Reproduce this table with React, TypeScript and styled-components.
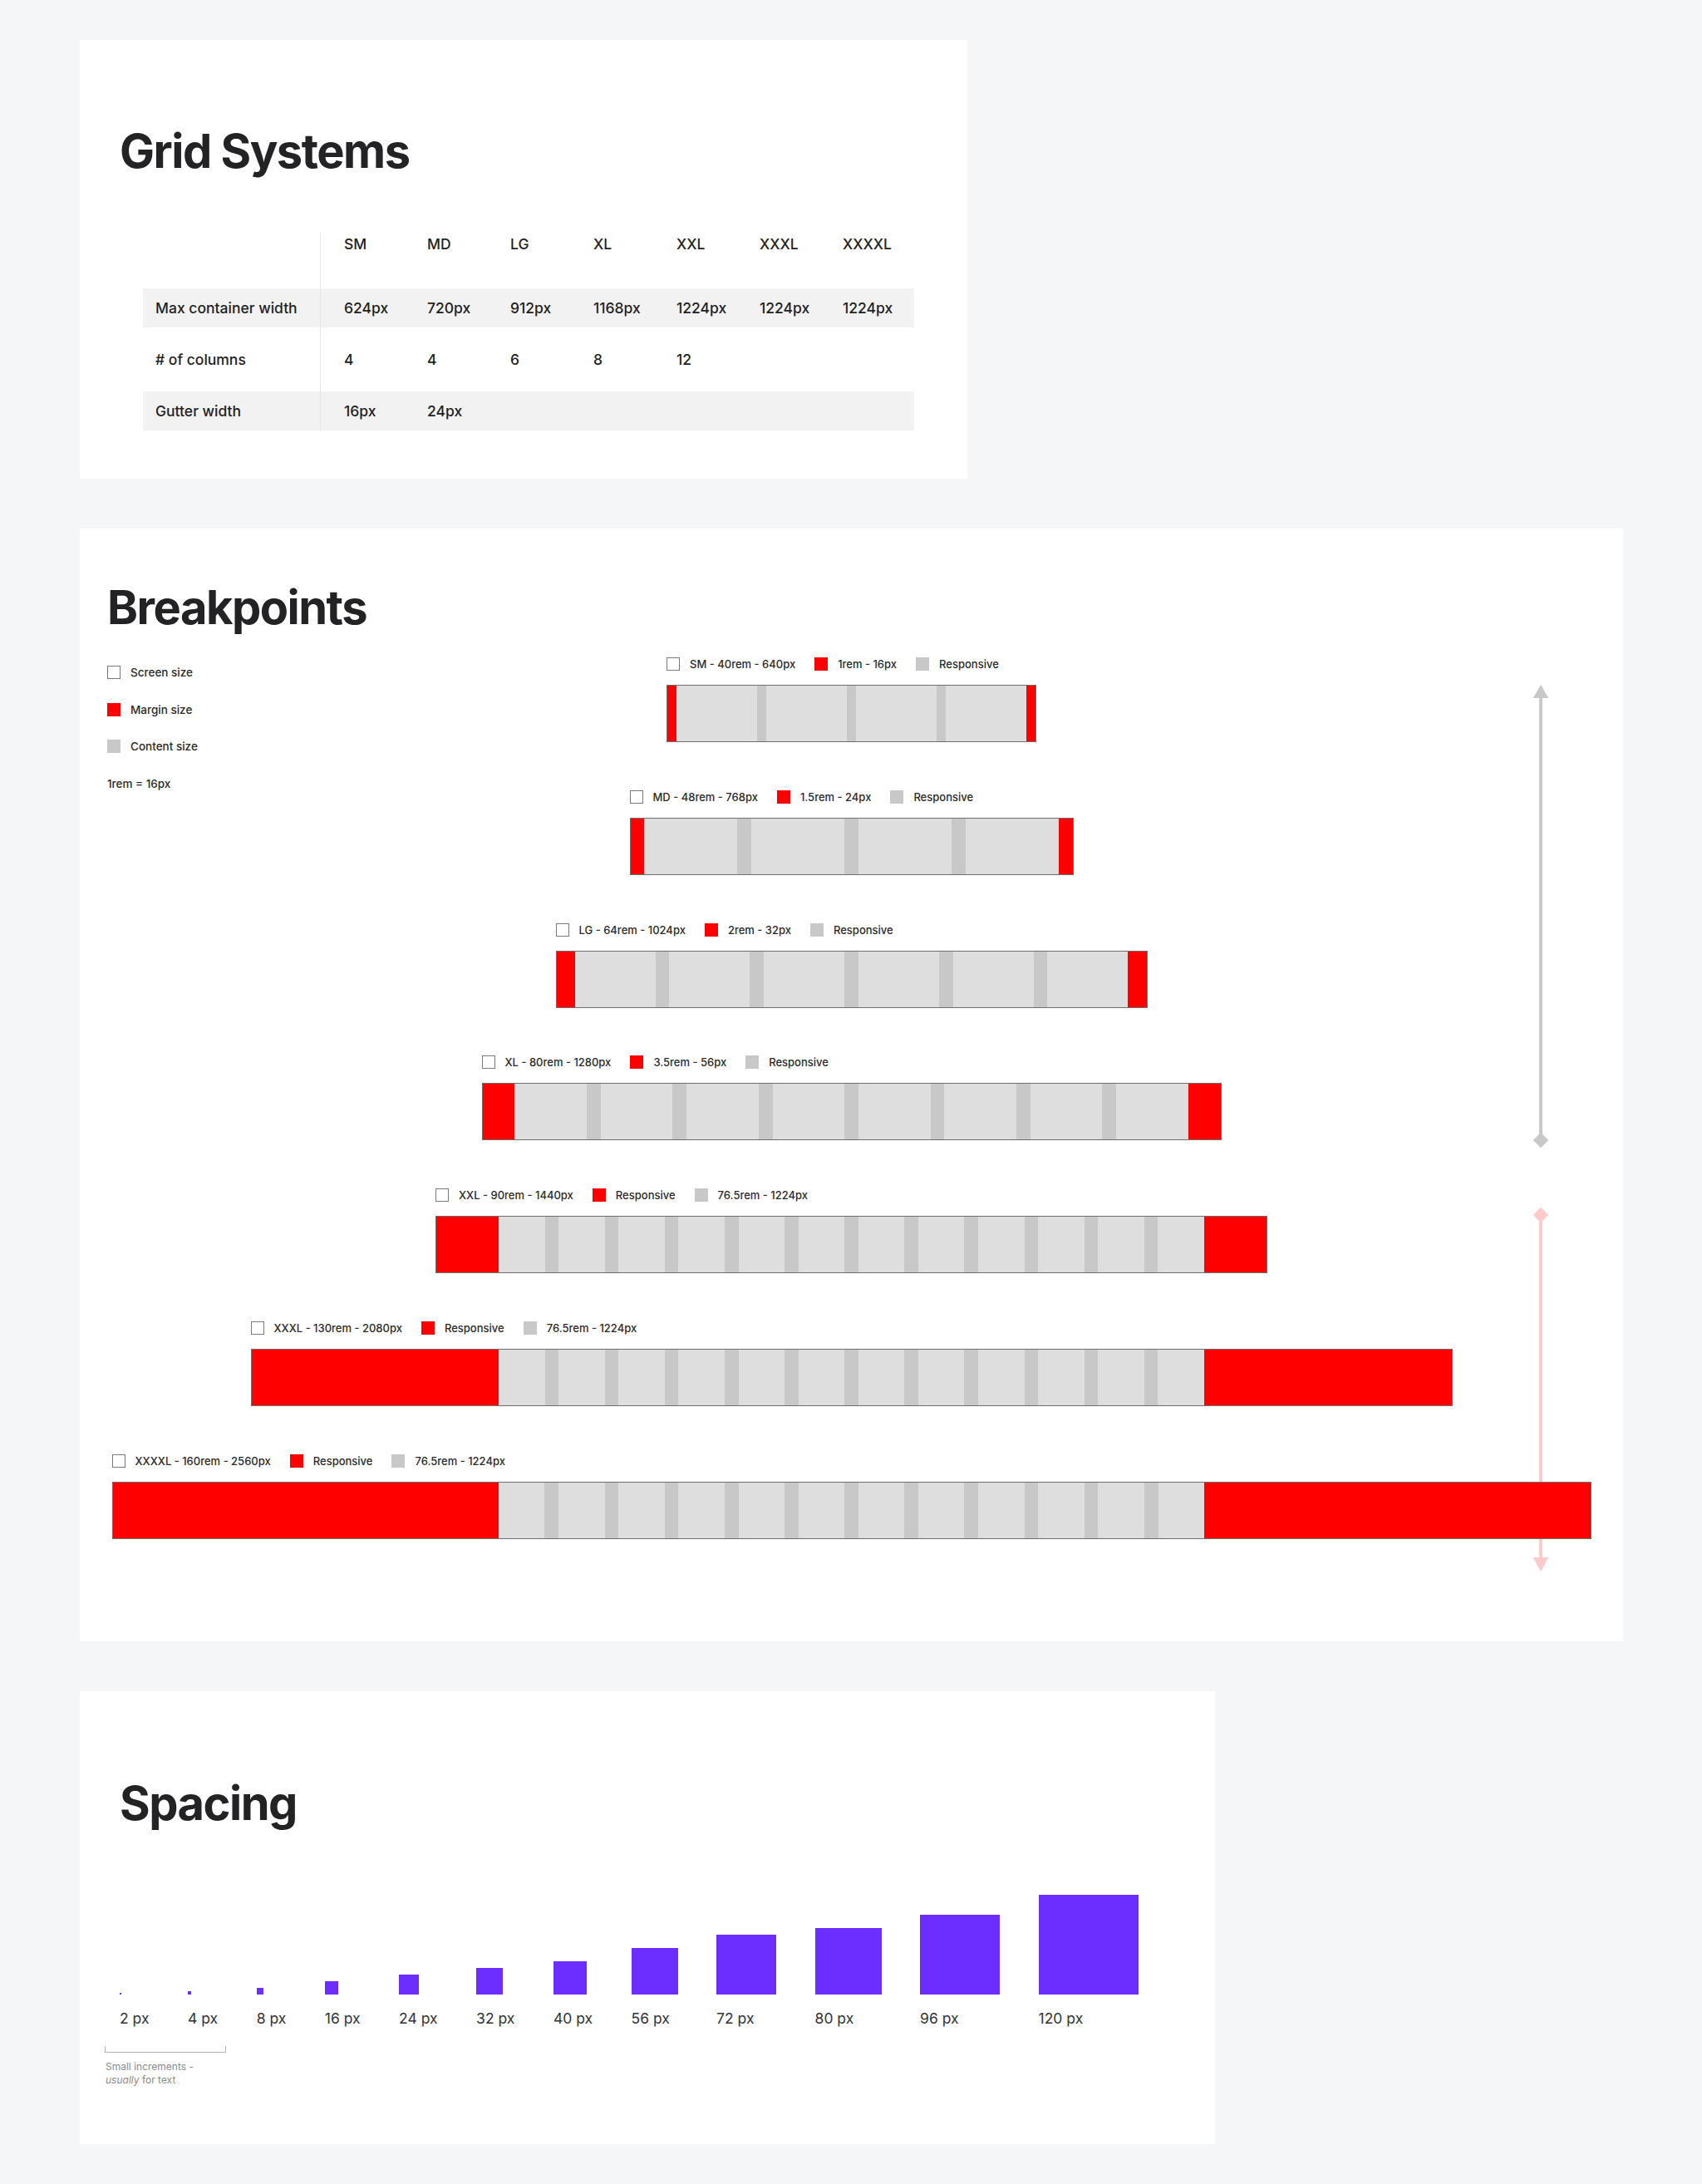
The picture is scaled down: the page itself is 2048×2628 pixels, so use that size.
import type { FC } from "react";
import styled, { createGlobalStyle } from "styled-components";

const SCALE = 1780 / 2560;

type Breakpoint = {
  labels: [string, string, string];
  screen: number;
  margin: number;
  gutter: number;
  cols: number;
};

const BREAKPOINTS: Breakpoint[] = [
  { labels: ["SM - 40rem - 640px", "1rem - 16px", "Responsive"], screen: 640, margin: 16, gutter: 16, cols: 4 },
  { labels: ["MD - 48rem - 768px", "1.5rem - 24px", "Responsive"], screen: 768, margin: 24, gutter: 24, cols: 4 },
  { labels: ["LG - 64rem - 1024px", "2rem - 32px", "Responsive"], screen: 1024, margin: 32, gutter: 24, cols: 6 },
  { labels: ["XL - 80rem - 1280px", "3.5rem - 56px", "Responsive"], screen: 1280, margin: 56, gutter: 24, cols: 8 },
  { labels: ["XXL - 90rem - 1440px", "Responsive", "76.5rem - 1224px"], screen: 1440, margin: 108, gutter: 24, cols: 12 },
  { labels: ["XXXL - 130rem - 2080px", "Responsive", "76.5rem - 1224px"], screen: 2080, margin: 428, gutter: 24, cols: 12 },
  { labels: ["XXXXL - 160rem - 2560px", "Responsive", "76.5rem - 1224px"], screen: 2560, margin: 668, gutter: 24, cols: 12 },
];

const SIZES = ["SM", "MD", "LG", "XL", "XXL", "XXXL", "XXXXL"];

const TABLE_ROWS: { label: string; values: string[]; shade: boolean }[] = [
  { label: "Max container width", values: ["624px", "720px", "912px", "1168px", "1224px", "1224px", "1224px"], shade: true },
  { label: "# of columns", values: ["4", "4", "6", "8", "12"], shade: false },
  { label: "Gutter width", values: ["16px", "24px"], shade: true },
];

const SPACINGS = [2, 4, 8, 16, 24, 32, 40, 56, 72, 80, 96, 120];

const GlobalStyle = createGlobalStyle`
  html, body {
    margin: 0;
    padding: 0;
    background: #f5f6f8;
  }
  body {
    font-family: Inter, "Liberation Sans", sans-serif;
    color: #232326;
    -webkit-font-smoothing: antialiased;
  }
`;

const Page = styled.main`
  display: flex;
  flex-direction: column;
  align-items: flex-start;
  gap: 60px;
  padding: 48px 0 48px 96px;
`;

const Card = styled.section<{ $w: number; $h: number; $pad: string }>`
  position: relative;
  box-sizing: border-box;
  width: ${(p) => p.$w}px;
  height: ${(p) => p.$h}px;
  padding: ${(p) => p.$pad};
  background: #fff;
`;

const Title = styled.h1`
  margin: 0;
  font-size: 56px;
  line-height: 56px;
  font-weight: 700;
  letter-spacing: -1.5px;
  color: #232326;
`;

/* grid systems table */

const Table = styled.div`
  display: flex;
  flex-direction: column;
  gap: 15px;
  width: 928px;
  margin: 70px 0 0 28px;
  background: linear-gradient(#e4e4e4, #e4e4e4) 213px 0 / 1px 100% no-repeat;
`;

const Row = styled.div<{ $head?: boolean; $shade?: boolean }>`
  display: grid;
  grid-template-columns: 214px repeat(7, 100px) 1fr;
  align-items: ${(p) => (p.$head ? "start" : "center")};
  height: ${(p) => (p.$head ? 52 : 47)}px;
  background: ${(p) => (p.$shade ? "#f2f2f2" : "transparent")};
  font-size: 17.5px;
  line-height: 20px;
  font-weight: 500;
  color: #222;
`;

const LabelCell = styled.div`
  align-self: stretch;
  box-sizing: border-box;
  display: flex;
  align-items: center;
  padding-left: 15px;
  border-right: 1px solid #e4e4e4;
  white-space: nowrap;
`;

const Cell = styled.div<{ $head?: boolean }>`
  padding: ${(p) => (p.$head ? "4px 0 0 28px" : "0 0 0 28px")};
  white-space: nowrap;
`;

/* breakpoints */

const Stage = styled.div`
  display: grid;
  margin-top: 32px;
`;

const Legend = styled.div`
  grid-area: 1 / 1;
  justify-self: start;
  display: flex;
  flex-direction: column;
  gap: 28.5px;
  margin-top: 10px;
`;

const LegendItem = styled.div<{ $small?: boolean }>`
  display: flex;
  align-items: center;
  gap: 12px;
  height: 16px;
  font-size: ${(p) => (p.$small ? 13 : 13.5)}px;
  line-height: 16px;
  font-weight: 500;
  color: #2a2a2a;
  white-space: nowrap;
`;

const Swatch = styled.span<{ $kind: "screen" | "margin" | "content" }>`
  flex: none;
  box-sizing: border-box;
  width: 16px;
  height: 16px;
  background: ${(p) => (p.$kind === "margin" ? "#ff0000" : p.$kind === "content" ? "#c8c8c8" : "#fff")};
  border: ${(p) => (p.$kind === "screen" ? "1.5px solid #7a7a7a" : "none")};
`;

const Bars = styled.div`
  grid-area: 1 / 1;
  justify-self: center;
  display: flex;
  flex-direction: column;
  align-items: center;
  gap: 57.8px;
`;

const Block = styled.div<{ $w: number }>`
  display: flex;
  flex-direction: column;
  gap: 17px;
  width: ${(p) => p.$w}px;
`;

const LabelRow = styled.div`
  display: flex;
  align-items: center;
  gap: 23px;
`;

const Bar = styled.div`
  position: relative;
  z-index: 1;
  display: flex;
  box-sizing: border-box;
  height: 69px;
  border: 1px solid #6e6e6e;
`;

const MarginFill = styled.div<{ $w: number }>`
  flex: none;
  width: ${(p) => p.$w}px;
  background: #ff0000;
`;

const ContentFill = styled.div<{ $gap: number }>`
  flex: 1;
  display: flex;
  gap: ${(p) => p.$gap}px;
  background: #c8c8c8;
`;

const Column = styled.div`
  flex: 1;
  background: #dedede;
`;

const Arrow = styled.svg`
  position: absolute;
  z-index: 0;
  left: 1748px;
  top: 188px;
`;

/* spacing */

const SpacingRow = styled.div`
  display: flex;
  align-items: flex-end;
  gap: 46.5px;
  margin-top: 82px;
`;

const SpacingItem = styled.div`
  display: flex;
  flex-direction: column;
  align-items: flex-start;
`;

const Square = styled.div<{ $s: number }>`
  width: ${(p) => p.$s}px;
  height: ${(p) => p.$s}px;
  background: #6b2eff;
`;

const SizeLabel = styled.span`
  margin-top: 18px;
  font-size: 17.5px;
  line-height: 22px;
  color: #333;
  white-space: nowrap;
`;

const Bracket = styled.div`
  box-sizing: border-box;
  width: 146px;
  height: 8px;
  margin: 22px 0 0 -18px;
  border: 1.5px solid #b3b3b3;
  border-top: none;
`;

const Note = styled.p`
  margin: 9px 0 0 -17px;
  font-size: 12px;
  line-height: 15.5px;
  color: #8c8c8c;
`;

const BreakpointBar: FC<{ bp: Breakpoint }> = ({ bp }) => {
  const width = Math.round(bp.screen * SCALE);
  const margin = bp.margin * SCALE;
  const kinds: ("screen" | "margin" | "content")[] = ["screen", "margin", "content"];
  return (
    <Block $w={width}>
      <LabelRow>
        {bp.labels.map((text, i) => (
          <LegendItem key={text + i} $small>
            <Swatch $kind={kinds[i]} />
            {text}
          </LegendItem>
        ))}
      </LabelRow>
      <Bar>
        <MarginFill $w={margin} />
        <ContentFill $gap={bp.gutter * SCALE}>
          {[...Array<unknown>(bp.cols)].map((_, i) => (
            <Column key={i} />
          ))}
        </ContentFill>
        <MarginFill $w={margin} />
      </Bar>
    </Block>
  );
};

export default function App() {
  return (
    <>
      <GlobalStyle />
      <Page>
        <Card $w={1068} $h={528} $pad="106px 0 0 48px">
          <Title>Grid Systems</Title>
          <Table>
            <Row $head>
              <LabelCell />
              {SIZES.map((s) => (
                <Cell key={s} $head>
                  {s}
                </Cell>
              ))}
            </Row>
            {TABLE_ROWS.map((row) => (
              <Row key={row.label} $shade={row.shade}>
                <LabelCell>{row.label}</LabelCell>
                {row.values.map((v, i) => (
                  <Cell key={i}>{v}</Cell>
                ))}
              </Row>
            ))}
          </Table>
        </Card>

        <Card $w={1857} $h={1339} $pad="67px 33px 0">
          <Title>Breakpoints</Title>
          <Stage>
            <Legend>
              <LegendItem>
                <Swatch $kind="screen" />
                Screen size
              </LegendItem>
              <LegendItem>
                <Swatch $kind="margin" />
                Margin size
              </LegendItem>
              <LegendItem>
                <Swatch $kind="content" />
                Content size
              </LegendItem>
              <LegendItem>1rem = 16px</LegendItem>
            </Legend>
            <Bars>
              {BREAKPOINTS.map((bp) => (
                <BreakpointBar key={bp.labels[0]} bp={bp} />
              ))}
            </Bars>
          </Stage>
          <Arrow width="20" height="1068" viewBox="0 0 20 1068">
            <polygon points="10,0 0.7,16 19.3,16" fill="#c8c8c8" />
            <rect x="8" y="15" width="4" height="533" fill="#c8c8c8" />
            <polygon points="10,538.7 19.3,548 10,557.3 0.7,548" fill="#c8c8c8" />
            <polygon points="10,628.7 19.3,638 10,647.3 0.7,638" fill="#ffcaca" />
            <rect x="8" y="640" width="4" height="411" fill="#ffcaca" />
            <polygon points="0.7,1050 19.3,1050 10,1067" fill="#ffcaca" />
          </Arrow>
        </Card>

        <Card $w={1366} $h={545} $pad="107px 0 0 48px">
          <Title>Spacing</Title>
          <SpacingRow>
            {SPACINGS.map((s) => (
              <SpacingItem key={s}>
                <Square $s={s} />
                <SizeLabel>{s} px</SizeLabel>
              </SpacingItem>
            ))}
          </SpacingRow>
          <Bracket />
          <Note>
            Small increments -
            <br />
            <em>usually</em> for text
          </Note>
        </Card>
      </Page>
    </>
  );
}
